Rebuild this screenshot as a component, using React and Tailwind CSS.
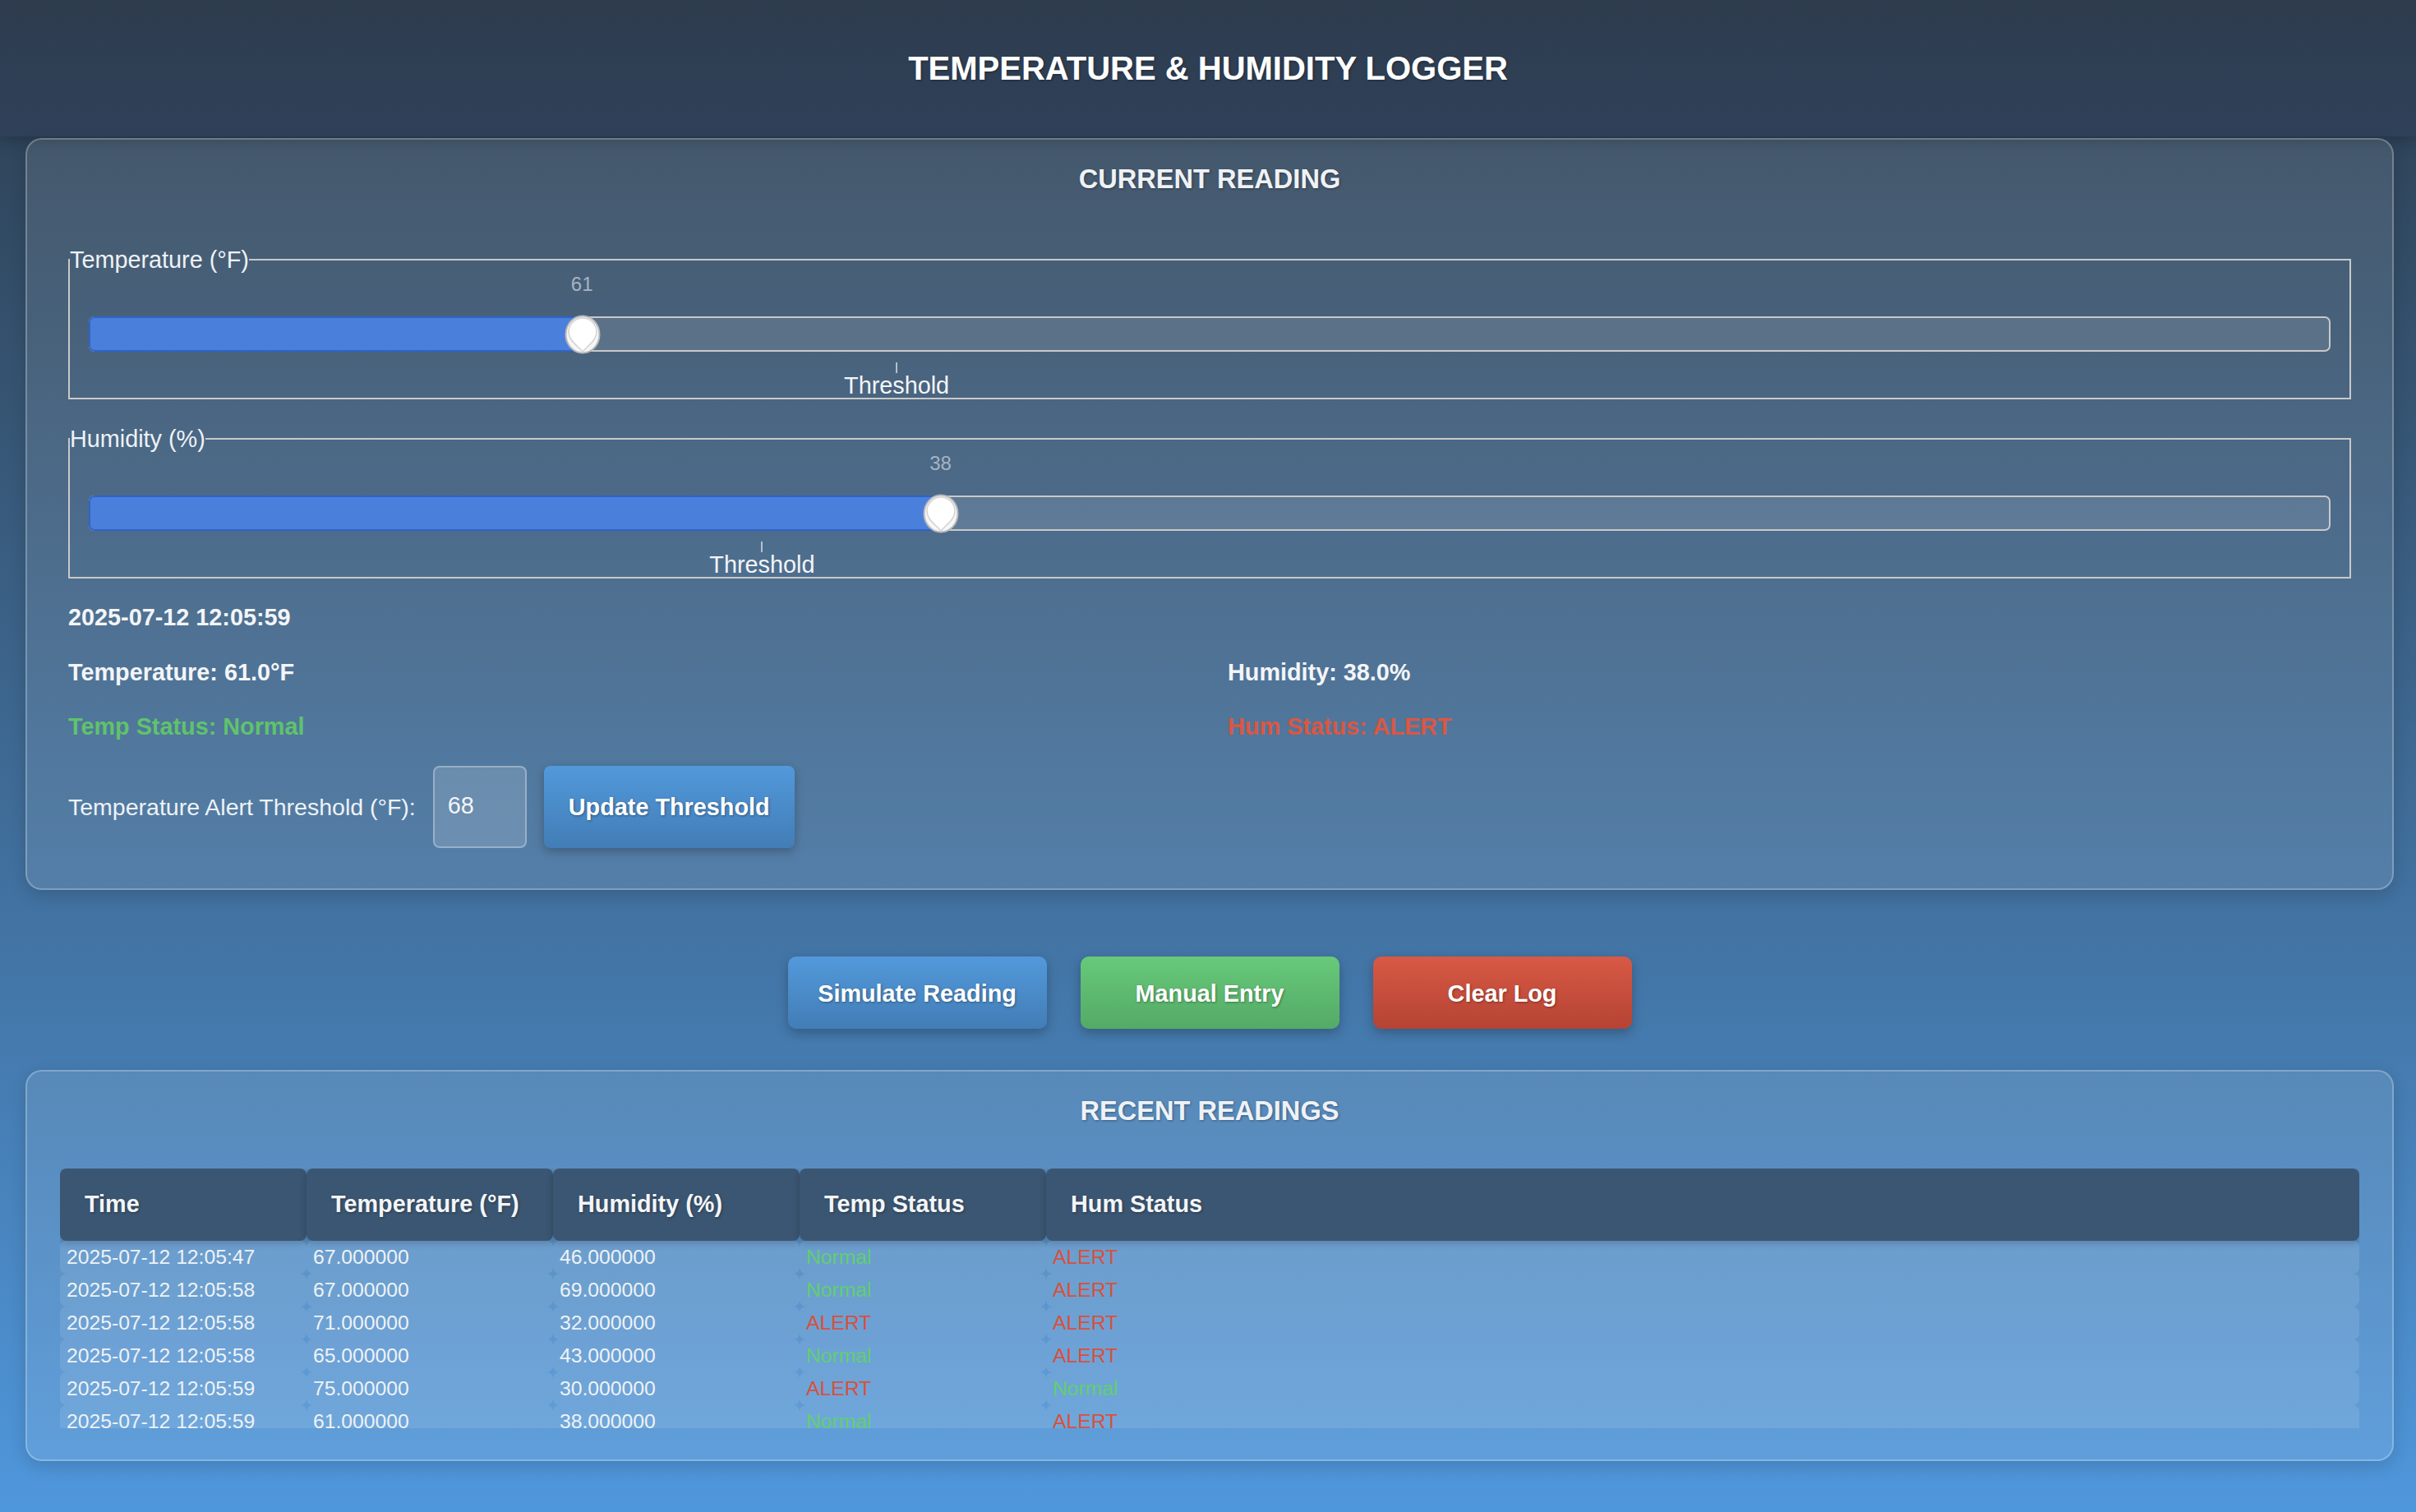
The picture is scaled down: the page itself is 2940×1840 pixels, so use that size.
import React from "react";

const rows = [
  ["2025-07-12 12:05:47", "67.000000", "46.000000", "Normal", "ALERT"],
  ["2025-07-12 12:05:58", "67.000000", "69.000000", "Normal", "ALERT"],
  ["2025-07-12 12:05:58", "71.000000", "32.000000", "ALERT", "ALERT"],
  ["2025-07-12 12:05:58", "65.000000", "43.000000", "Normal", "ALERT"],
  ["2025-07-12 12:05:59", "75.000000", "30.000000", "ALERT", "Normal"],
  ["2025-07-12 12:05:59", "61.000000", "38.000000", "Normal", "ALERT"],
];

function Thumb() {
  return (
    <svg width="44" height="48" viewBox="0 0 44 48">
      <ellipse cx="22" cy="24" rx="20.5" ry="22.5" fill="#f6f6f6" stroke="#b8b8b8" strokeWidth="2" />
      <path
        d="M5 21 A17 17 0 0 1 39 21 C39 31 29 37 22 45 C15 37 5 31 5 21 Z"
        fill="#ffffff"
        stroke="#d2d2d2"
        strokeWidth="1.5"
      />
    </svg>
  );
}

function SliderField({ legend, value, frac, thr, className }) {
  return (
    <fieldset className={"border-2 border-[#c9c9c9] " + className}>
      <legend className="text-[28.8px] leading-[32px] text-[#eef2f6]">{legend}</legend>
      <div className="px-[23px]">
        <div className="relative h-[28px]">
          <span
            className="absolute top-0 -translate-x-1/2 text-[24px] leading-[28px] text-[#a6b3c3]"
            style={{ left: `${frac * 100}%` }}
          >
            {value}
          </span>
        </div>
        <div className="relative mt-[25px] h-[43px] rounded-[7px] border-2 border-[#c9c9c9] bg-white/10">
          <div
            className="absolute -left-[2px] -top-[2px] -bottom-[2px] rounded-l-[7px] border-2 border-[#2f64c6] bg-[#4a80dc]"
            style={{ width: `calc(${frac * 100}% + 2px)` }}
          />
          <div
            className="absolute top-1/2 -translate-x-1/2 -translate-y-1/2"
            style={{ left: `${frac * 100}%` }}
          >
            <Thumb />
          </div>
        </div>
        <div className="relative mt-[13px] h-[13px]">
          <div className="absolute top-0 h-[13px] w-[2px] bg-[#b7c0cc]" style={{ left: `${thr * 100}%` }} />
        </div>
        <div className="relative h-[30px]">
          <span
            className="absolute top-0 -translate-x-1/2 text-[28.8px] leading-[30px] text-[#f3f5f8]"
            style={{ left: `calc(${thr * 100}% + 1px)` }}
          >
            Threshold
          </span>
        </div>
      </div>
    </fieldset>
  );
}

const shadowText = "[text-shadow:1px_1px_3px_rgba(0,0,0,0.35)]";

export default function App() {
  return (
    <div className="min-h-[1840px] w-full bg-gradient-to-b from-[#2c3e50] to-[#4f97dc] font-['Liberation_Sans',Arial,Helvetica,sans-serif] text-[#ecf0f1]">
      <header className="flex h-[166px] items-center justify-center bg-gradient-to-b from-[#2e3c4e] to-[#2f4159] shadow-[0_4px_18px_rgba(0,0,0,0.25)]">
        <h1 className={"text-[40px] font-bold leading-[46px] text-white " + shadowText}>
          TEMPERATURE &amp; HUMIDITY LOGGER
        </h1>
      </header>

      <main className="pl-[31px] pr-[27px] pb-[60px]">
        <section className="mt-[2px] rounded-[20px] border-2 border-white/25 bg-white/10 px-[50px] pt-[29px] pb-[49px] shadow-[0_6px_20px_rgba(0,0,0,0.15)]">
          <h2 className={"text-center text-[32.6px] font-bold leading-[38px] text-[#eef2f6] " + shadowText}>
            CURRENT READING
          </h2>

          <SliderField className="mt-[63px]" legend="Temperature (°F)" value="61" frac={0.22} thr={0.36} />
          <SliderField className="mt-[32px]" legend="Humidity (%)" value="38" frac={0.38} thr={0.3} />

          <div className="mt-[31px] text-[28.8px] font-bold leading-[33px] text-[#f3f5f8]">2025-07-12 12:05:59</div>

          <div className="mt-[34px] grid grid-cols-2 gap-x-[44px] gap-y-[33px] text-[28.8px] font-bold leading-[33px]">
            <div className="text-[#f3f5f8]">Temperature: 61.0°F</div>
            <div className="text-[#f3f5f8]">Humidity: 38.0%</div>
            <div className="text-[#5fc36b]">Temp Status: Normal</div>
            <div className="text-[#dc5641]">Hum Status: ALERT</div>
          </div>

          <div className="mt-[31px] flex items-center gap-[21px]">
            <span className="text-[28.5px] leading-[33px] text-[#eef2f6]">Temperature Alert Threshold (°F):</span>
            <div className="flex h-[100px] w-[114px] items-center rounded-[8px] border-2 border-white/30 bg-white/15 pb-[3px] pl-[16px] text-[28.8px] text-[#f3f5f8]">
              68
            </div>
            <button
              className={
                "h-[100px] w-[305px] rounded-[8px] bg-gradient-to-b from-[#5299db] to-[#427db6] pt-[2px] text-[28.8px] font-bold text-white shadow-[0_4px_12px_rgba(0,0,0,0.25)] " +
                shadowText
              }
            >
              Update Threshold
            </button>
          </div>
        </section>

        <div className="mt-[81px] flex justify-center gap-[41px]">
          <button
            className={
              "h-[88px] w-[315px] rounded-[10px] bg-gradient-to-b from-[#5399db] to-[#427db6] pt-[3px] text-[28.8px] font-bold text-white shadow-[0_5px_14px_rgba(0,0,0,0.25)] " +
              shadowText
            }
          >
            Simulate Reading
          </button>
          <button
            className={
              "h-[88px] w-[315px] rounded-[10px] bg-gradient-to-b from-[#67c97a] to-[#54aa66] pt-[3px] text-[28.8px] font-bold text-white shadow-[0_5px_14px_rgba(0,0,0,0.25)] " +
              shadowText
            }
          >
            Manual Entry
          </button>
          <button
            className={
              "h-[88px] w-[315px] rounded-[10px] bg-gradient-to-b from-[#d85946] to-[#b54333] pt-[3px] text-[28.8px] font-bold text-white shadow-[0_5px_14px_rgba(0,0,0,0.25)] " +
              shadowText
            }
          >
            Clear Log
          </button>
        </div>

        <section className="mt-[50px] rounded-[20px] border-2 border-white/25 bg-white/10 px-[40px] pt-[29px] pb-[38px] shadow-[0_6px_20px_rgba(0,0,0,0.15)]">
          <h2 className={"text-center text-[32.6px] font-bold leading-[38px] text-[#eef2f6] " + shadowText}>
            RECENT READINGS
          </h2>
          <div className="mt-[51px] h-[316px] overflow-hidden">
            <table className="w-full table-fixed border-separate border-spacing-0">
              <colgroup>
                <col className="w-[300px]" />
                <col className="w-[300px]" />
                <col className="w-[300px]" />
                <col className="w-[300px]" />
                <col />
              </colgroup>
              <thead>
                <tr>
                  {["Time", "Temperature (°F)", "Humidity (%)", "Temp Status", "Hum Status"].map((h) => (
                    <th
                      key={h}
                      className={
                        "h-[88px] rounded-[8px] bg-[#3b5672] pl-[30px] text-left text-[28.8px] font-bold text-[#f3f5f8] shadow-[0_3px_8px_rgba(0,0,0,0.22)] " +
                        shadowText
                      }
                    >
                      {h}
                    </th>
                  ))}
                </tr>
              </thead>
              <tbody>
                {rows.map((r, i) => (
                  <tr key={i}>
                    {r.map((c, j) => {
                      let color = "text-[#eef2f6]";
                      if (j >= 3) color = c === "Normal" ? "text-[#62cf6f]" : "text-[#d9503b]";
                      return (
                        <td
                          key={j}
                          className={"h-[40px] rounded-[8px] bg-white/10 px-[8px] text-[24.7px] leading-[28px] " + color}
                        >
                          {c}
                        </td>
                      );
                    })}
                  </tr>
                ))}
              </tbody>
            </table>
          </div>
        </section>
      </main>
    </div>
  );
}
